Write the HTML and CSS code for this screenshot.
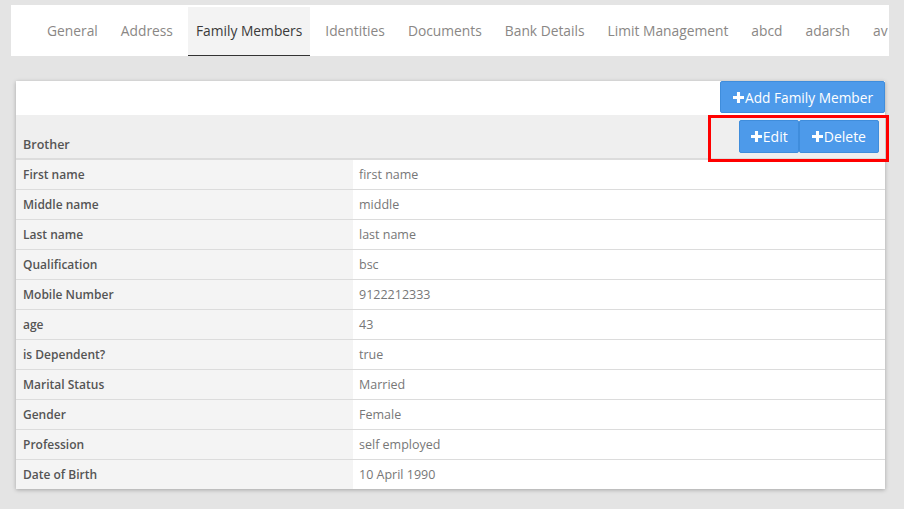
FILE: index.html
```html
<!DOCTYPE html>
<html>
<head>
<meta charset="utf-8">
<link rel="stylesheet" href="styles.css">
</head>
<body>
<nav class="tabs">
  <a class="tab">General</a>
  <a class="tab">Address</a>
  <a class="tab active">Family Members</a>
  <a class="tab">Identities</a>
  <a class="tab">Documents</a>
  <a class="tab">Bank Details</a>
  <a class="tab">Limit Management</a>
  <a class="tab">abcd</a>
  <a class="tab">adarsh</a>
  <a class="tab">av</a>
</nav>
<section class="card">
  <div class="toolbar">
    <button class="btn btn-add"><svg class="plus" viewBox="0 0 10 10"><path d="M3.6 0h2.8v3.6H10v2.8H6.4V10H3.6V6.4H0V3.6h3.6z"/></svg>Add Family Member</button>
  </div>
  <div class="group-head">
    <span class="group-title">Brother</span>
    <div class="actions">
      <button class="btn btn-edit"><svg class="plus" viewBox="0 0 10 10"><path d="M3.6 0h2.8v3.6H10v2.8H6.4V10H3.6V6.4H0V3.6h3.6z"/></svg>Edit</button>
      <button class="btn"><svg class="plus" viewBox="0 0 10 10"><path d="M3.6 0h2.8v3.6H10v2.8H6.4V10H3.6V6.4H0V3.6h3.6z"/></svg>Delete</button>
      <div class="highlight"></div>
    </div>
  </div>
  <div class="rows">
    <div class="row"><div class="k">First name</div><div class="v">first name</div></div>
    <div class="row"><div class="k">Middle name</div><div class="v">middle</div></div>
    <div class="row"><div class="k">Last name</div><div class="v">last name</div></div>
    <div class="row"><div class="k">Qualification</div><div class="v">bsc</div></div>
    <div class="row"><div class="k">Mobile Number</div><div class="v">9122212333</div></div>
    <div class="row"><div class="k">age</div><div class="v">43</div></div>
    <div class="row"><div class="k">is Dependent?</div><div class="v">true</div></div>
    <div class="row"><div class="k">Marital Status</div><div class="v">Married</div></div>
    <div class="row"><div class="k">Gender</div><div class="v">Female</div></div>
    <div class="row"><div class="k">Profession</div><div class="v">self employed</div></div>
    <div class="row"><div class="k">Date of Birth</div><div class="v">10 April 1990</div></div>
  </div>
</section>
</body>
</html>
```
FILE: styles.css
```css
* { box-sizing: border-box; }
html, body { margin: 0; padding: 0; }
body {
  background: #e4e4e4;
  font-family: "Open Sans", "Lato", sans-serif;
  width: 904px;
  height: 509px;
  overflow: hidden;
}
.tabs {
  margin: 5px 15px 0 11px;
  height: 51px;
  background: #fff;
  display: flex;
  align-items: stretch;
  padding: 2px 0 0 28px;
  gap: 7px;
  overflow: hidden;
  white-space: nowrap;
}
.tab {
  display: flex;
  align-items: center;
  padding: 0 8px 2px;
  font-size: 13.8px;
  color: #8a8785;
  flex: none;
}
.tab.active {
  background: #f3f3f3;
  color: #3a3a3a;
  border-bottom: 2px solid #333;
  margin-bottom: -1px;
}
.card {
  margin: 25px 19px 0 16px;
  width: 869px;
  background: #fff;
  box-shadow: 0 1px 4px rgba(0,0,0,0.28);
}
.toolbar {
  height: 34px;
  display: flex;
  justify-content: flex-end;
  align-items: flex-start;
}
.btn {
  display: inline-flex;
  align-items: center;
  background: #4d9aea;
  color: #fff;
  border: 1px solid #3f8ddc;
  border-radius: 2px;
  font-family: "Open Sans", "Lato", sans-serif;
  font-size: 14px;
  padding: 0 12px;
  height: 33px;
  cursor: pointer;
}
.btn-add { height: 32px; padding: 0 11px 0 12px; font-size: 13.7px; }
.btn-edit { padding: 0 10px 0 11px; }
.plus { width: 11px; height: 11px; fill: #fff; margin-right: 1px; }
.group-head {
  height: 45px;
  background: #efefef;
  border-bottom: 2px solid #dcdcdc;
  display: flex;
  justify-content: space-between;
  align-items: stretch;
  padding: 0 6px 0 7px;
}
.group-title {
  align-self: flex-end;
  padding-bottom: 5px;
  font-size: 12.5px;
  font-weight: 600;
  color: #555;
}
.actions {
  position: relative;
  display: flex;
  align-items: flex-start;
  padding-top: 5px;
}
.actions .btn { height: 33px; }
.highlight {
  position: absolute;
  left: -31px;
  right: -10px;
  top: 0;
  height: 47px;
  border: 3px solid #f00;
  pointer-events: none;
}
.rows { display: flex; flex-direction: column; }
.row {
  display: flex;
  height: 30px;
  border-bottom: 1px solid #dcdcdc;
  font-size: 12.5px;
}
.row:last-child { border-bottom: 0; height: 29px; }
.k {
  width: 337px;
  background: #f4f4f4;
  color: #555;
  font-weight: 600;
  font-size: 12px;
  padding-left: 7px;
  display: flex;
  align-items: center;
}
.v {
  flex: 1;
  color: #777;
  padding-left: 6px;
  display: flex;
  align-items: center;
}
```
